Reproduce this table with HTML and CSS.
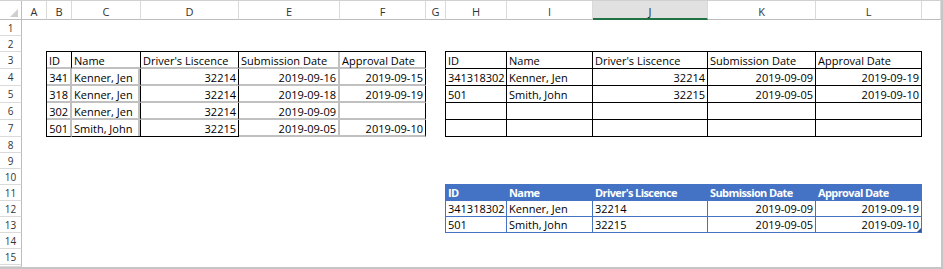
FILE: index.html
```html
<!DOCTYPE html>
<html lang="en">
<head>
<meta charset="utf-8">
<title>Licence requests</title>
<link rel="stylesheet" href="styles.css">
</head>
<body>
<div class="sheet">
  <!-- column headers -->
  <div class="colhead corner"><span class="select-all"></span></div>
  <div class="colhead">A</div>
  <div class="colhead">B</div>
  <div class="colhead">C</div>
  <div class="colhead">D</div>
  <div class="colhead">E</div>
  <div class="colhead">F</div>
  <div class="colhead">G</div>
  <div class="colhead">H</div>
  <div class="colhead">I</div>
  <div class="colhead is-active">J</div>
  <div class="colhead">K</div>
  <div class="colhead">L</div>
  <div class="colhead"></div>

  <!-- row headers -->
  <div class="rowhead">1</div>
  <div class="rowhead">2</div>
  <div class="rowhead">3</div>
  <div class="rowhead">4</div>
  <div class="rowhead">5</div>
  <div class="rowhead">6</div>
  <div class="rowhead">7</div>
  <div class="rowhead">8</div>
  <div class="rowhead">9</div>
  <div class="rowhead">10</div>
  <div class="rowhead">11</div>
  <div class="rowhead">12</div>
  <div class="rowhead">13</div>
  <div class="rowhead">14</div>
  <div class="rowhead">15</div>
  <div class="rowhead"></div>

  <!-- B3:F7 source list -->
  <div class="xl-table t-plain">
    <div class="cell edge-k">ID</div>
    <div class="cell edge-k">Name</div>
    <div class="cell edge-k">Driver's Liscence</div>
    <div class="cell">Submission Date</div>
    <div class="cell edge-k">Approval Date</div>

    <div class="cell num">341</div>
    <div class="cell edge-kg">Kenner, Jen</div>
    <div class="cell edge-k num">32214</div>
    <div class="cell num">2019-09-16</div>
    <div class="cell edge-k num">2019-09-15</div>

    <div class="cell num">318</div>
    <div class="cell edge-kg">Kenner, Jen</div>
    <div class="cell edge-k num">32214</div>
    <div class="cell num">2019-09-18</div>
    <div class="cell edge-k num">2019-09-19</div>

    <div class="cell num">302</div>
    <div class="cell edge-kg">Kenner, Jen</div>
    <div class="cell edge-k num">32214</div>
    <div class="cell num">2019-09-09</div>
    <div class="cell edge-k num"></div>

    <div class="cell num foot-k">501</div>
    <div class="cell edge-kg foot-k">Smith, John</div>
    <div class="cell edge-k num foot-k">32215</div>
    <div class="cell num">2019-09-05</div>
    <div class="cell edge-k num">2019-09-10</div>
  </div>

  <!-- H3:L7 result range -->
  <div class="xl-table t-grid">
    <div class="cell">ID</div>
    <div class="cell">Name</div>
    <div class="cell">Driver's Liscence</div>
    <div class="cell">Submission Date</div>
    <div class="cell">Approval Date</div>

    <div class="cell">341318302</div>
    <div class="cell">Kenner, Jen</div>
    <div class="cell num">32214</div>
    <div class="cell num">2019-09-09</div>
    <div class="cell num">2019-09-19</div>

    <div class="cell">501</div>
    <div class="cell">Smith, John</div>
    <div class="cell num">32215</div>
    <div class="cell num">2019-09-05</div>
    <div class="cell num">2019-09-10</div>

    <div class="cell"></div>
    <div class="cell"></div>
    <div class="cell"></div>
    <div class="cell"></div>
    <div class="cell"></div>

    <div class="cell"></div>
    <div class="cell"></div>
    <div class="cell"></div>
    <div class="cell"></div>
    <div class="cell"></div>
  </div>

  <!-- H11:L13 formatted table -->
  <div class="xl-table t-blue">
    <div class="cell head">ID</div>
    <div class="cell head">Name</div>
    <div class="cell head">Driver's Liscence</div>
    <div class="cell head">Submission Date</div>
    <div class="cell head">Approval Date</div>

    <div class="cell">341318302</div>
    <div class="cell">Kenner, Jen</div>
    <div class="cell">32214</div>
    <div class="cell num">2019-09-09</div>
    <div class="cell num">2019-09-19</div>

    <div class="cell">501</div>
    <div class="cell">Smith, John</div>
    <div class="cell">32215</div>
    <div class="cell num">2019-09-05</div>
    <div class="cell num">2019-09-10</div>

    <span class="resize-handle"></span>
  </div>
</div>
</body>
</html>
```

FILE: styles.css
```css
html, body {
  margin: 0;
  padding: 0;
  background: #ffffff;
}

body {
  font-family: "Open Sans", "Noto Sans", sans-serif;
  font-size: 11px;
  color: #000;
}

/* worksheet: row-header column + columns A..M, header row + rows 1..16 */
.sheet {
  display: grid;
  grid-template-columns: 22px 25px 25px 69px 98px 101px 86px 20px 61px 86px 115px 108px 106px 19px;
  grid-template-rows: 19px 16px 16px repeat(5, 17px) repeat(8, 16px) 2px;
  width: max-content;
  border-top: 1px solid #d0d0d0;
  border-right: 2px solid #c6c6c6;
  border-bottom: 2px solid #c6c6c6;
  background: #fff;
}

.colhead {
  box-sizing: border-box;
  border-right: 1px solid #dadada;
  border-bottom: 1px solid #bcbcbc;
  background: #fff;
  color: #333;
  text-align: center;
  padding-top: 2px;
  line-height: 17px;
  font-size: 11px;
}

.colhead.is-active {
  background: #e1e1e1;
  border-bottom: 2px solid #217346;
  color: #1d1d1d;
}

.corner {
  display: flex;
  justify-content: flex-end;
  align-items: flex-end;
  padding: 0 3px 2px 0;
  border-right-color: #bcbcbc;
}

.select-all {
  width: 0;
  height: 0;
  border-left: 8px solid transparent;
  border-bottom: 8px solid #cfcfcf;
}

.rowhead {
  grid-column: 1;
  box-sizing: border-box;
  border-right: 1px solid #bcbcbc;
  border-bottom: 1px solid #dadada;
  background: #fff;
  color: #333;
  text-align: center;
  line-height: 16px;
  font-size: 10px;
}

/* tables sit on the gridlines, so they reach one pixel up and left */
.xl-table {
  display: grid;
  margin: -1px 0 0 -1px;
  position: relative;
}

.cell {
  box-sizing: border-box;
  padding: 0 2px;
  line-height: 17px;
  white-space: nowrap;
  color: #000;
}

.num {
  text-align: right;
}

/* B3:F7 */
.t-plain {
  grid-column: 3 / 8;
  grid-row: 4 / 9;
  grid-template-columns: 25px 69px 98px 101px 86px;
  grid-auto-rows: 17px;
  border-top: 1px solid #000;
  border-left: 1px solid #000;
}

.t-plain .cell {
  border-right: 2px solid #c0c0c0;
  border-bottom: 2px solid #c0c0c0;
}

.t-plain .edge-k {
  border-right: 1px solid #000;
}

.t-plain .edge-kg {
  border-right: 1px solid #000;
  box-shadow: inset -2px 0 0 #c0c0c0;
}

.t-plain .foot-k {
  border-bottom: 1px solid #000;
}

/* H3:L7 */
.t-grid {
  grid-column: 9 / 14;
  grid-row: 4 / 9;
  grid-template-columns: 61px 86px 115px 108px 106px;
  grid-auto-rows: 17px;
  border-top: 1px solid #000;
  border-left: 1px solid #000;
}

.t-grid .cell {
  border-right: 1px solid #000;
  border-bottom: 1px solid #000;
}

/* H11:L13 */
.t-blue {
  grid-column: 9 / 14;
  grid-row: 12 / 15;
  grid-template-columns: 61px 86px 115px 108px 106px;
  grid-auto-rows: 16px;
  border-top: 1px solid #4472c4;
  border-left: 1px solid #4472c4;
}

.t-blue .cell {
  line-height: 16px;
  border-right: 1px solid #4472c4;
  border-bottom: 1px solid #4472c4;
}

.t-blue .head {
  background: #4472c4;
  color: #fff;
  font-weight: 700;
  letter-spacing: -0.6px;
}

.resize-handle {
  position: absolute;
  right: 1px;
  bottom: 1px;
  width: 0;
  height: 0;
  border-left: 4px solid transparent;
  border-bottom: 4px solid #2f5597;
}
```
